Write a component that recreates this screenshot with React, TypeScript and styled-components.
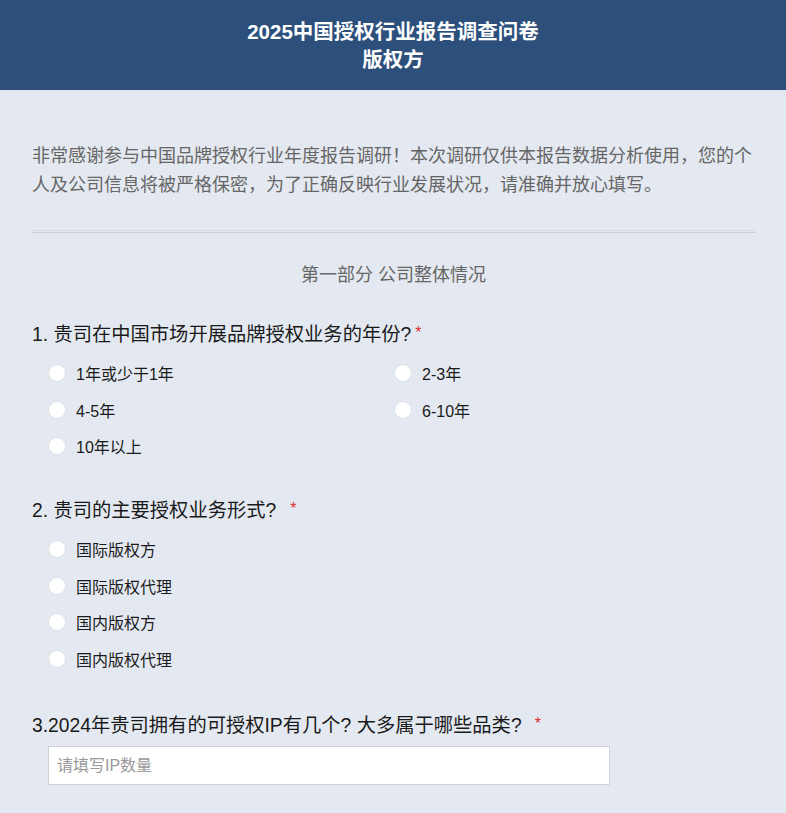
import React from 'react';
import styled, { createGlobalStyle } from 'styled-components';

const GlobalStyle = createGlobalStyle`
    html, body {
        margin: 0;
        padding: 0;
        background: #e4e9f1;
        font-family: 'Liberation Sans', 'Noto Sans CJK SC', sans-serif;
    }
`;

type Option = { label: string };

type Question = {
    title: string;
    options?: Option[];
    columns?: number;
    placeholder?: string;
    starGap?: number;
};

const questions: Question[] = [
    {
        title: '1. 贵司在中国市场开展品牌授权业务的年份?',
        columns: 2,
        starGap: 4,
        options: [
            { label: '1年或少于1年' },
            { label: '2-3年' },
            { label: '4-5年' },
            { label: '6-10年' },
            { label: '10年以上' },
        ],
    },
    {
        title: '2. 贵司的主要授权业务形式?',
        columns: 1,
        starGap: 14,
        options: [
            { label: '国际版权方' },
            { label: '国际版权代理' },
            { label: '国内版权方' },
            { label: '国内版权代理' },
        ],
    },
    {
        title: '3.2024年贵司拥有的可授权IP有几个? 大多属于哪些品类?',
        starGap: 13,
        placeholder: '请填写IP数量',
    },
];

const Page = styled.div`
    min-height: 100vh;
    background: #e4e9f1;
`;

const Header = styled.header`
    height: 90px;
    background: #2d4f7c;
    color: #fff;
    display: flex;
    flex-direction: column;
    align-items: center;
    justify-content: center;
    padding-top: 2px;
    box-sizing: border-box;
`;

const HeaderTitle = styled.h1`
    margin: 0;
    font-size: 20.5px;
    font-weight: 700;
    line-height: 28px;
    text-align: center;
`;

const Body = styled.main`
    padding: 52px 31px 0 32px;
`;

const Intro = styled.p`
    margin: 0;
    font-size: 18px;
    line-height: 29px;
    color: #666;
`;

const Divider = styled.div`
    margin-top: 30px;
    height: 1px;
    border-top: 1px solid #d6dae2;
    border-bottom: 1px solid #c8ccd5;
`;

const SectionTitle = styled.h2`
    margin: 29px 0 0;
    font-size: 18px;
    font-weight: 400;
    line-height: 26px;
    text-align: center;
    color: #666;
`;

const QuestionBlock = styled.section<{ $gap: number }>`
    margin-top: ${({ $gap }) => $gap}px;
`;

const QuestionTitle = styled.div`
    font-size: 19.3px;
    line-height: 28px;
    color: #1a1a1a;
`;

const Star = styled.span<{ $gap: number }>`
    color: #e03030;
    margin-left: ${({ $gap }) => $gap}px;
    font-size: 16px;
    vertical-align: 3px;
`;

const OptionGrid = styled.div<{ $columns: number }>`
    display: grid;
    grid-template-columns: repeat(${({ $columns }) => $columns}, 346px);
    padding: 6px 0 0 16px;
`;

const OptionRow = styled.label`
    display: flex;
    align-items: center;
    height: 36.6px;
    font-size: 16px;
    color: #1a1a1a;
    cursor: pointer;
`;

const Radio = styled.span`
    width: 16px;
    height: 16px;
    border-radius: 50%;
    background: #fff;
    border: 1px solid #dde1e8;
    margin-right: 10px;
    flex-shrink: 0;
`;

const TextInput = styled.input`
    display: block;
    margin: 6px 0 0 16px;
    width: 562px;
    height: 39px;
    box-sizing: border-box;
    border: 1px solid #cfd2d8;
    background: #fff;
    padding: 0 8px;
    font-size: 16px;
    font-family: 'Liberation Sans', 'Noto Sans CJK SC', sans-serif;
    color: #333;
    outline: none;

    &::placeholder {
        color: #999;
    }
`;

const blockGaps = [31, 30, 33];

export default function App() {
    return (
        <Page>
            <GlobalStyle />
            <Header>
                <HeaderTitle>2025中国授权行业报告调查问卷</HeaderTitle>
                <HeaderTitle>版权方</HeaderTitle>
            </Header>
            <Body>
                <Intro>
                    非常感谢参与中国品牌授权行业年度报告调研！本次调研仅供本报告数据分析使用，您的个人及公司信息将被严格保密，为了正确反映行业发展状况，请准确并放心填写。
                </Intro>
                <Divider />
                <SectionTitle>第一部分 公司整体情况</SectionTitle>
                {questions.map((q, i) => (
                    <QuestionBlock key={q.title} $gap={blockGaps[i]}>
                        <QuestionTitle>
                            {q.title}
                            <Star $gap={q.starGap ?? 4}>*</Star>
                        </QuestionTitle>
                        {q.options && (
                            <OptionGrid $columns={q.columns ?? 1}>
                                {q.options.map((o) => (
                                    <OptionRow key={o.label}>
                                        <Radio />
                                        {o.label}
                                    </OptionRow>
                                ))}
                            </OptionGrid>
                        )}
                        {q.placeholder && <TextInput placeholder={q.placeholder} />}
                    </QuestionBlock>
                ))}
            </Body>
        </Page>
    );
}
